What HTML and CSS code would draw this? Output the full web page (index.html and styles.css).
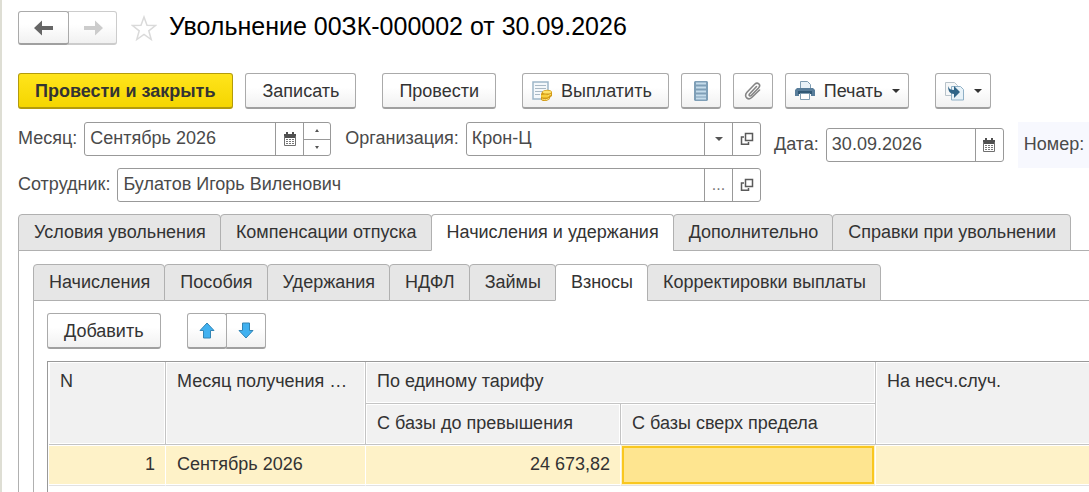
FILE: index.html
```html
<!DOCTYPE html>
<html lang="ru">
<head>
<meta charset="utf-8">
<meta name="viewport" content="width=device-width, initial-scale=1">
<title>Увольнение 00ЗК-000002 от 30.09.2026</title>
<link rel="stylesheet" href="styles.css">
</head>
<body>
<svg class="sprite" aria-hidden="true">
  <symbol id="calendar" viewBox="0 0 14 16">
    <path fill="#505050" d="M1 3h12v4H1zM3 1h2v3H3zM9 1h2v3H9z"/>
    <path fill="none" stroke="#707070" d="M1.500 5v9.500h11V5"/>
    <path fill="#777" d="M3 8h2v1H3zM6 8h2v1H6zM9 8h2v1H9zM3 10h2v1H3zM6 10h2v1H6zM9 10h2v1H9zM3 12h2v1H3zM6 12h2v1H6zM9 12h2v1H9z"/>
  </symbol>
  <symbol id="open" viewBox="0 0 14 14">
    <path fill="none" stroke="#5a5a5a" stroke-width="1.500" d="M5.500 1.500h7v7h-7zM4 5H1.500v7.300h7V10"/>
  </symbol>
</svg>
<main class="page">
  <header class="heading">
    <div class="joined">
      <button class="btn nav" aria-label="Назад"><svg width="20" height="16" viewBox="0 0 20 16"><path fill="#666" d="M0 8 8 0.500V6h11v4H8v5.500z"/></svg></button>
      <button class="btn nav nav-off" aria-label="Вперед" disabled><svg width="20" height="16" viewBox="0 0 20 16"><path fill="#ccc" d="M20 8 12 0.500V6H1v4h11v5.500z"/></svg></button>
    </div>
    <button class="star" aria-label="В избранное"><svg width="26" height="27" viewBox="0 0 26 27"><path fill="#fff" stroke="#dadada" stroke-width="1.500" d="M13 2l3 8.300 8.500.2-6.700 5.300 2.400 8.700-7.200-5-7.200 5 2.400-8.700L1.500 10.500l8.500-.2z"/></svg></button>
    <h1 class="title">Увольнение 00ЗК-000002 от 30.09.2026</h1>
  </header>

  <div class="commands">
    <div class="group">
      <button class="btn primary">Провести и закрыть</button>
      <button class="btn">Записать</button>
    </div>
    <button class="btn">Провести</button>
    <div class="group">
      <button class="btn with-icon">
        <svg width="20" height="20" viewBox="0 0 20 20"><path fill="#f4f8fb" stroke="#9db6c9" stroke-width="1.500" d="M1 1h15v17H1z"/><path stroke="#a9b9c5" d="M3 4.500h11M3 7.500h11M3 10.500h8M3 13.500h5"/><path fill="#d29a16" d="M10 11c2-3 9-3 10 0v4c-1 1-2 1-2 2-1 4-9 4-9 1v-5z"/><ellipse cx="15" cy="11" rx="4.300" ry="1.600" fill="#ffe36b"/><ellipse cx="13" cy="15" rx="4" ry="1.500" fill="#f8cf3c"/><path stroke="#ffe27a" fill="none" d="M10 18c2 1 5 1 7-.5M16 14.500l3-1"/></svg>
        Выплатить
      </button>
      <button class="btn square" aria-label="Реестр"><svg width="14" height="20" viewBox="0 0 14 20"><path fill="#7f9fb7" d="M1 0h12l1 1v18l-1 1H1l-1-1V1z"/><path stroke="#c5dceb" stroke-width="2" d="M2 2.500h10M2 6.500h10M2 10.500h10M2 14.500h10M2 17.500h10"/></svg></button>
      <button class="btn square" aria-label="Файлы"><svg width="18" height="20" viewBox="0 0 18 20"><path fill="none" stroke="#858585" stroke-width="1.600" stroke-linecap="round" d="M12.500 5.500 5.500 13c-1 1.300.5 2.700 1.700 1.500L14.500 7c3-3.500-1-6.500-3.800-3.700L3 11.300c-4 4.500 1.500 8.500 5 5L15.500 9"/></svg></button>
      <button class="btn with-icon">
        <svg width="20" height="19" viewBox="0 0 20 19"><path fill="#e9f2f8" stroke="#7f9db3" d="M5.500 8V.5h7l3 3V8"/><path fill="#587d9a" d="M2 7h16l2 2v6h-4v-3H4v3H0V9z"/><path fill="#315976" d="M3 10h14v3H3z"/><path fill="#fff" stroke="#819eb3" d="M5.500 12.500h9v6h-9z"/></svg>
        Печать
        <span class="caret"></span>
      </button>
    </div>
    <button class="btn with-icon" aria-label="Создать на основании">
      <svg width="20" height="20" viewBox="0 0 20 20"><path fill="#f5f7f8" stroke="#b8c2c9" d="M.5 1.500h9l3 3v10H.5z"/><path fill="#e8f2f8" stroke="#8fb0c6" d="M6.500 5.500h9l3 3v10.500h-12z"/><path fill="#2f6588" d="M3 5c1 3 3 4 6 4V5l6 6-6 6v-4c-4 0-6-3-6-8z"/></svg>
      <span class="caret"></span>
    </button>
  </div>

  <form class="fields">
    <div class="fields-main">
      <div class="row">
        <label class="label" for="month">Месяц:</label>
        <div class="field month">
          <input id="month" type="text" value="Сентябрь 2026">
          <button type="button" class="add" aria-label="Календарь"><svg width="14" height="16"><use href="#calendar"/></svg></button>
          <div class="spin">
            <button type="button" aria-label="Больше"><span class="tick up"></span></button>
            <button type="button" aria-label="Меньше"><span class="tick"></span></button>
          </div>
        </div>
        <label class="label next" for="org">Организация:</label>
        <div class="field wide">
          <input id="org" type="text" value="Крон-Ц">
          <button type="button" class="add" aria-label="Выбрать"><span class="caret small"></span></button>
          <button type="button" class="add" aria-label="Открыть"><svg width="14" height="14"><use href="#open"/></svg></button>
        </div>
      </div>
      <div class="row">
        <label class="label" for="person">Сотрудник:</label>
        <div class="field wide">
          <input id="person" type="text" value="Булатов Игорь Виленович">
          <button type="button" class="add" aria-label="Подобрать"><span class="dots">...</span></button>
          <button type="button" class="add" aria-label="Открыть"><svg width="14" height="14"><use href="#open"/></svg></button>
        </div>
      </div>
    </div>
    <div class="row date-row">
      <label class="label" for="date">Дата:</label>
      <div class="field date">
        <input id="date" type="text" value="30.09.2026">
        <button type="button" class="add" aria-label="Календарь"><svg width="14" height="16"><use href="#calendar"/></svg></button>
      </div>
    </div>
    <div class="number">Номер:</div>
  </form>

  <div class="tabs" role="tablist">
    <button class="tab" role="tab">Условия увольнения</button>
    <button class="tab" role="tab">Компенсации отпуска</button>
    <button class="tab active" role="tab" aria-selected="true">Начисления и удержания</button>
    <button class="tab" role="tab">Дополнительно</button>
    <button class="tab" role="tab">Справки при увольнении</button>
  </div>
  <section class="panel outer">
    <div class="tabs" role="tablist">
      <button class="tab" role="tab">Начисления</button>
      <button class="tab" role="tab">Пособия</button>
      <button class="tab" role="tab">Удержания</button>
      <button class="tab" role="tab">НДФЛ</button>
      <button class="tab" role="tab">Займы</button>
      <button class="tab active" role="tab" aria-selected="true">Взносы</button>
      <button class="tab" role="tab">Корректировки выплаты</button>
    </div>
    <section class="panel inner">
      <div class="tools">
        <button class="btn">Добавить</button>
        <div class="joined">
          <button class="btn square" aria-label="Вверх"><svg width="16" height="17" viewBox="0 0 16 17"><path fill="#41b1f0" stroke="#3285b5" d="M8 1l7 7.500h-3.500V16h-7V8.500H1z"/></svg></button>
          <button class="btn square" aria-label="Вниз"><svg width="16" height="17" viewBox="0 0 16 17"><path fill="#41b1f0" stroke="#3285b5" d="M8 16l7-7.500h-3.500V1h-7v7.500H1z"/></svg></button>
        </div>
      </div>
      <div class="table-box">
        <table class="grid">
          <colgroup><col class="c-num"><col class="c-month"><col class="c-base"><col class="c-base"><col></colgroup>
          <thead>
            <tr>
              <th rowspan="2">N</th>
              <th rowspan="2">Месяц получения …</th>
              <th colspan="2">По единому тарифу</th>
              <th rowspan="2" class="last">На несч.случ.</th>
            </tr>
            <tr><th>С базы до превышения</th><th>С базы сверх предела</th></tr>
          </thead>
          <tbody>
            <tr><td class="right">1</td><td>Сентябрь 2026</td><td class="right">24 673,82</td><td class="current"></td><td class="last"></td></tr>
          </tbody>
        </table>
      </div>
    </section>
  </section>
</main>
</body>
</html>
```
FILE: styles.css
```css
* { box-sizing: border-box; }

body {
  margin: 0;
  background: #fff;
  color: #333;
  font: 18px/22px "Liberation Sans", Arial, sans-serif;
  overflow: hidden;
}

button, input { font: inherit; color: inherit; }
button { margin: 0; padding: 0; border: 0; background: none; white-space: nowrap; }
svg { display: block; flex: none; }
.sprite { position: absolute; width: 0; height: 0; }

.page {
  display: flex;
  flex-direction: column;
  min-height: 100vh;
  padding: 11px 0 0 16px;
  border-left: 2px solid #deded4;
}

.heading { display: flex; align-items: center; height: 34px; }
.title { margin: 0 0 4px 12px; font-size: 25px; line-height: 30px; font-weight: 400; color: #000; white-space: nowrap; }
.star { margin-left: 14px; }

.btn {
  display: flex;
  align-items: center;
  justify-content: center;
  height: 36px;
  padding: 0 16px;
  border: 1px solid #aaa;
  border-bottom: 2px solid #a0a0a0;
  border-radius: 3px;
  background: linear-gradient(#fff 40%, #f1f1f1);
}
.btn.primary { padding-right: 17px; border-color: #b39b0c; background: linear-gradient(#ffe41c, #f5d600); font-weight: 700; }
.btn.with-icon { gap: 9px; padding: 0 16px 0 9px; }
.btn.with-icon:has(.caret) { padding-right: 8px; }
.btn.square { width: 40px; padding: 0; }
.btn.nav { width: 51px; height: 34px; padding: 0; }
.btn.nav-off { width: 49px; border-color: #ccc; }

.joined { display: flex; }
.joined .btn + .btn { margin-left: -1px; border-top-left-radius: 0; border-bottom-left-radius: 0; }
.joined .btn:first-child { position: relative; }

.caret { border: 4px solid transparent; border-top-color: #333; border-bottom: 0; }
.caret.small { border-top-color: #555; }

.commands { display: flex; gap: 26px; margin-top: 28px; }
.group { display: flex; gap: 12px; }

.fields { display: flex; align-items: flex-start; margin-top: 13px; color: #4a4a4a; }
.fields-main { display: flex; flex-direction: column; flex: 0 1 743px; gap: 12px; }
.row { display: flex; align-items: center; white-space: nowrap; }
.label { margin-right: 7px; padding-bottom: 2px; }
.label.next { margin-left: 14px; }
.field { display: flex; height: 34px; border: 1px solid #999; border-radius: 3px; overflow: hidden; background: #fff; }
.field input { flex: 1; width: 0; min-width: 0; padding: 0 5px 2px; border: 0; outline: 0; background: none; }
.field.wide { flex: 1; }
.field.month { width: 247px; }
.field.date { width: 178px; }
.add { display: flex; align-items: center; justify-content: center; width: 28px; border-left: 1px solid #999; }
.dots { color: #777; font-size: 16px; }
.spin { display: flex; flex-direction: column; width: 27px; border-left: 1px solid #999; }
.spin button { display: flex; flex: 1; align-items: center; justify-content: center; }
.spin button + button { border-top: 1px solid #999; }
.tick { border: 2px solid transparent; border-top: 3px solid #555; border-bottom: 0; }
.tick.up { border-top: 0; border-bottom: 3px solid #555; }
.date-row { margin: 6px 14px 0 13px; }
.number { flex: 1; padding: 11px 0 13px 6px; background: #f7f8fe; white-space: nowrap; }

.tabs { display: flex; position: relative; margin-top: 12px; }
.tab {
  height: 37px;
  margin-right: -1px;
  padding: 0 14px 2px 15px;
  border: 1px solid #b0b0b0;
  border-radius: 4px 4px 0 0;
  background: #e6e6e6;
}
.tab.active { border-bottom-color: #fff; background: #fff; }

.panel { flex: 1; margin-top: -1px; border: solid #b0b0b0; border-width: 1px 0 0 1px; }
.outer { display: flex; flex-direction: column; padding: 1px 0 0 14px; }
.inner { display: flex; flex-direction: column; padding: 12px 0 0 13px; }

.tools { display: flex; gap: 26px; }
.table-box { flex: 1; margin-top: 12px; padding-left: 1px; border: solid #999; border-width: 1px 0 0 1px; }
.grid { width: 100%; table-layout: fixed; border-collapse: separate; border-spacing: 0; }
.c-num { width: 117px; }
.c-month { width: 200px; }
.c-base { width: 255px; }
.grid th {
  height: 41px;
  padding: 8px 11px 10px;
  border: solid #c4c4c4;
  border-width: 0 1px 1px 0;
  background: #f1f1f1;
  box-shadow: inset 0 0 0 1px #fff;
  font-weight: 400;
  text-align: left;
  vertical-align: top;
  white-space: nowrap;
}
.grid th[colspan] { height: 42px; }
.grid td {
  height: 41px;
  padding: 8px 11px 10px;
  border-right: 1px solid #fff;
  border-bottom: 1px solid #e2e2e2;
  background: #fef2c8;
  box-shadow: inset 0 1px #fff, inset 0 -1px #fff;
}
.grid .right { text-align: right; padding-right: 10px; }
.grid .current {
  background: #fee590;
  box-shadow: inset 0 0 0 1px #fef2c8, inset 0 0 0 3px #f9c720;
}
.grid .last { border-right: 0; }
.grid th.last { box-shadow: inset 1px 1px #fff, inset 0 -1px #fff; }
```
